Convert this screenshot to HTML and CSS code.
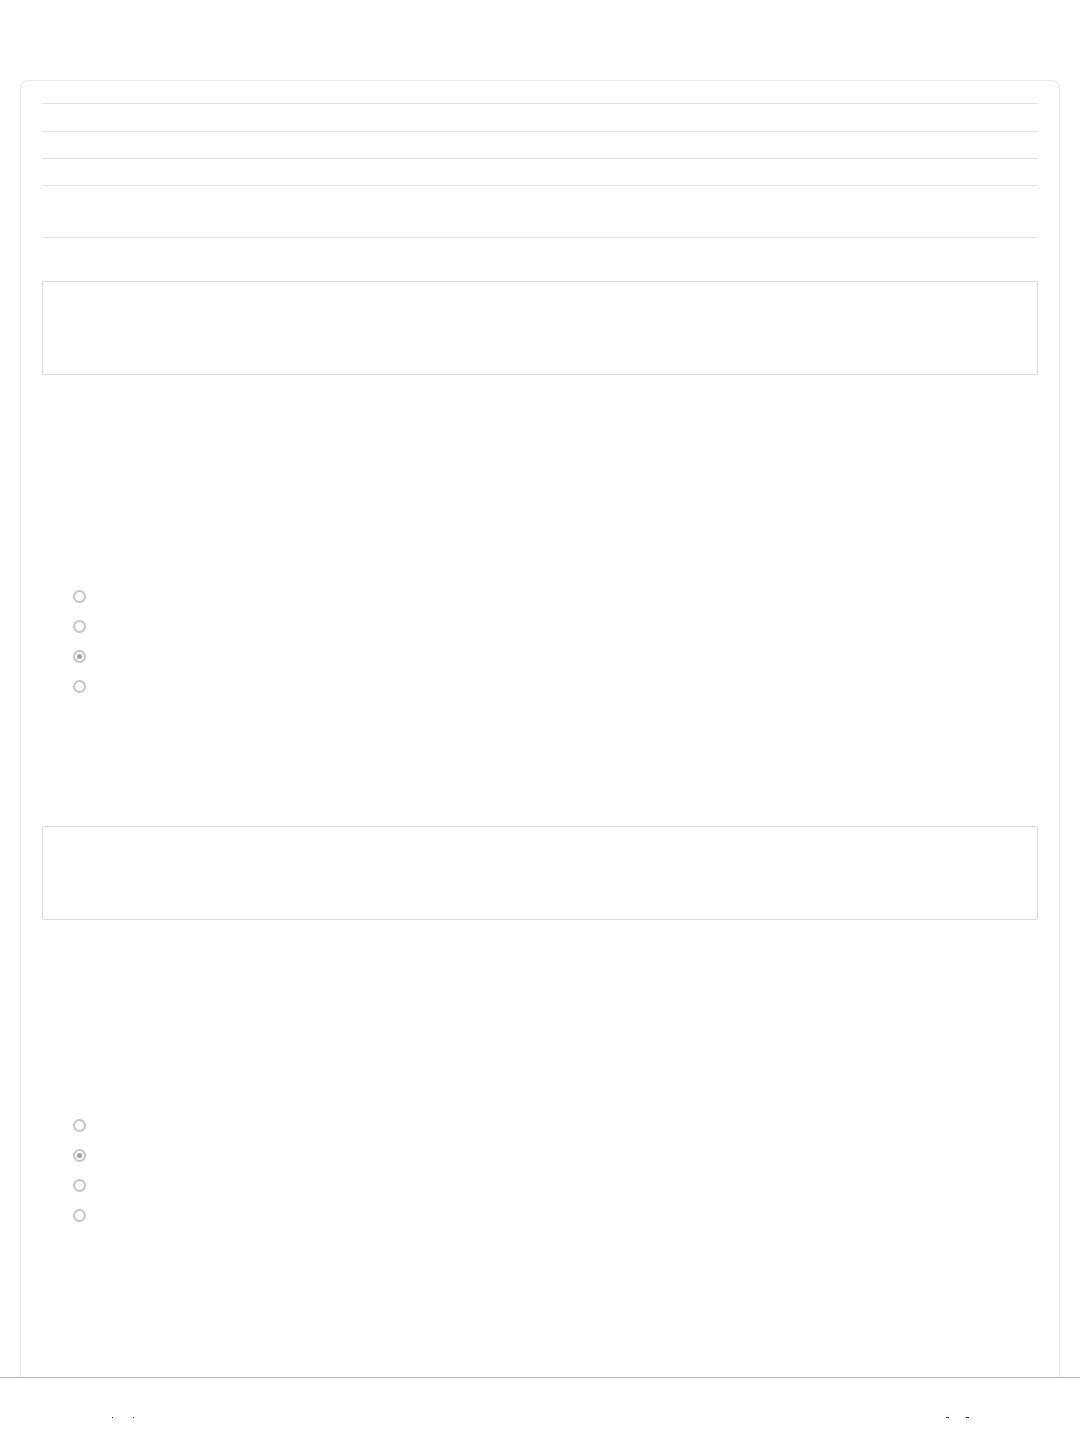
FILE: index.html
```html
<!DOCTYPE html>
<html>
<head>
  <title>Quiz</title>
  <link rel="stylesheet" href="styles.css">
</head>
<body>
  <div class="card">
    <div class="meta">
      <div class="meta-row"></div>
      <div class="meta-row"></div>
      <div class="meta-row"></div>
      <div class="meta-row tall"></div>
    </div>

    <div class="question first">
      <div class="prompt-box"></div>
      <ul class="options">
        <li><span class="radio"></span></li>
        <li><span class="radio"></span></li>
        <li><span class="radio checked"></span></li>
        <li><span class="radio"></span></li>
      </ul>
    </div>

    <div class="question second">
      <div class="prompt-box"></div>
      <ul class="options">
        <li><span class="radio"></span></li>
        <li><span class="radio checked"></span></li>
        <li><span class="radio"></span></li>
        <li><span class="radio"></span></li>
      </ul>
    </div>
  </div>

  <div class="footer">
    <div class="nav nav-left">
      <span class="dot"></span>
      <span class="dot"></span>
    </div>
    <div class="nav nav-right">
      <span class="dash"></span>
      <span class="dash"></span>
    </div>
  </div>
</body>
</html>
```

FILE: styles.css
```css
body {
  font-family: "Liberation Sans", Arial, sans-serif;
  margin: 0;
  background: #fff;
}

.card {
  margin: 80px 20px 0;
  padding: 22px 21px 200px;
  border: 1px solid #e8e8e8;
  border-bottom: none;
  border-radius: 8px 8px 0 0;
  min-height: 1300px;
}

.meta {
  border-bottom: 1px solid #e3e3e3;
}

.meta-row {
  height: 26px;
  border-top: 1px solid #e3e3e3;
}

.meta-row:first-child {
  height: 27px;
}

.meta-row:nth-child(3) {
  border-top-color: #e0dfe8;
}

.meta-row.tall {
  height: 51px;
}

.question.first {
  margin-top: 43px;
}

.question.second {
  margin-top: 124px;
}

.prompt-box {
  height: 92px;
  border: 1px solid #d9d9de;
  border-radius: 2px;
}

.options {
  list-style: none;
  margin: 207px 0 0;
  padding: 0 0 0 31px;
}

.question.second .options {
  margin-top: 191px;
}

.options li {
  height: 30px;
  box-sizing: border-box;
  padding-top: 8px;
  display: flex;
  align-items: flex-start;
}

.radio {
  box-sizing: border-box;
  width: 13px;
  height: 13px;
  border: 2px solid #c3c3c8;
  border-radius: 50%;
  background: #fff;
  display: flex;
  align-items: center;
  justify-content: center;
}

.radio.checked::after {
  content: "";
  width: 5px;
  height: 5px;
  border-radius: 50%;
  background: #a0a0a8;
}

.footer {
  position: fixed;
  left: 0;
  right: 0;
  bottom: 0;
  height: 63px;
  background: #fff;
  border-top: 1px solid #b8b8b8;
  display: flex;
  justify-content: space-between;
  align-items: flex-start;
  padding: 39px 111px 0 112px;
  box-sizing: border-box;
}

.nav {
  display: flex;
}

.nav-left {
  gap: 20px;
}

.nav-right {
  gap: 17px;
}

.dot {
  width: 1px;
  height: 1px;
  background: #3d3577;
}

.dash {
  width: 3px;
  height: 1px;
  background: #3d3577;
}
```
